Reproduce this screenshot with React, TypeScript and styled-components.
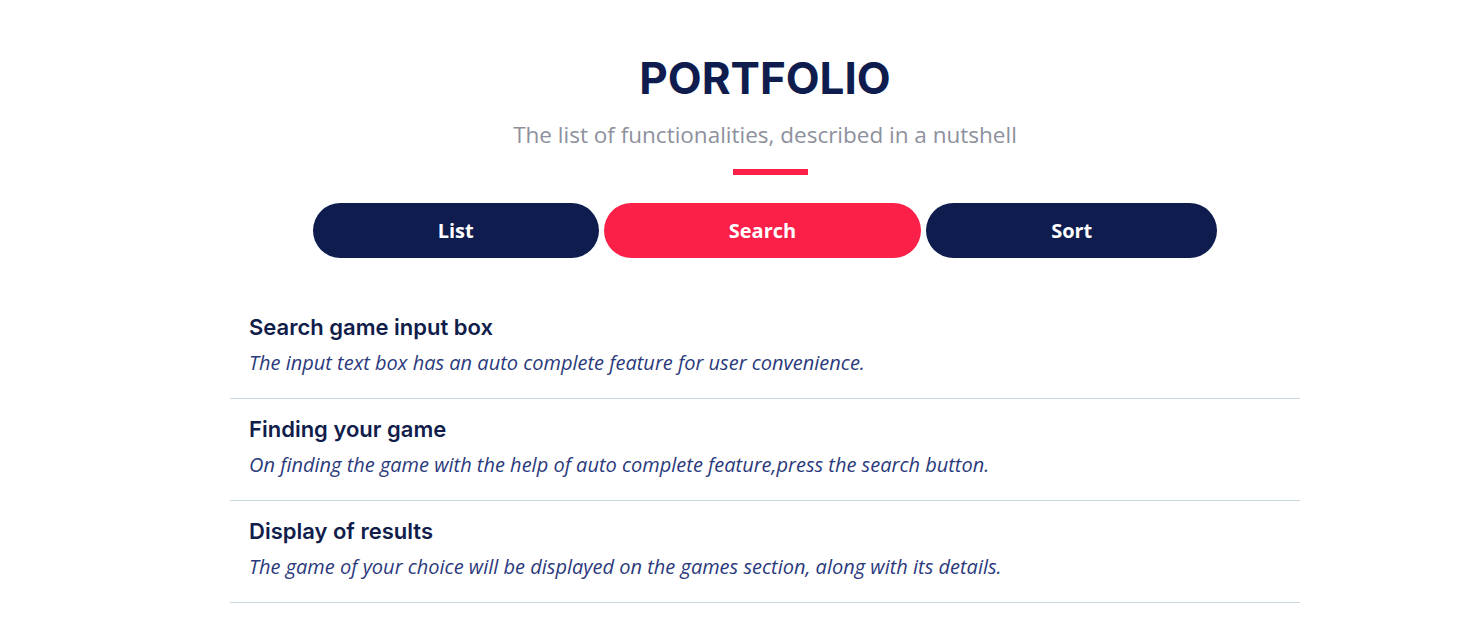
import React from "react";
import styled, { createGlobalStyle } from "styled-components";

const Global = createGlobalStyle`
  html, body { margin: 0; padding: 0; background: #ffffff; }
  body { font-family: "Open Sans", "Liberation Sans", sans-serif; }
`;

const Page = styled.div`
  padding: 52px 0 0 55px;
  display: flex;
  flex-direction: column;
  align-items: center;
`;

const Title = styled.h1`
  margin: 0;
  font-family: "Inter", "Lato", sans-serif;
  font-weight: 700;
  font-size: 44px;
  line-height: 52px;
  color: #0e1c4e;
`;

const Subtitle = styled.p`
  margin: 16px 0 0;
  font-family: "Open Sans", sans-serif;
  font-size: 22.5px;
  line-height: 30px;
  color: #8d919c;
`;

const Bar = styled.div`
  width: 75px;
  height: 6px;
  background: #fb2048;
  margin: 19px 0 0 11px;
`;

const Tabs = styled.div`
  display: flex;
  gap: 5px;
  margin-top: 28px;
`;

const Tab = styled.button<{ $active?: boolean }>`
  height: 55px;
  padding: 0 125px;
  border: none;
  border-radius: 28px;
  background: ${(p) => (p.$active ? "#fb2048" : "#0e1c4e")};
  color: #ffffff;
  font-family: "Open Sans", sans-serif;
  font-weight: 700;
  font-size: 20px;
  cursor: pointer;
`;

const List = styled.div`
  width: 1070px;
  margin-top: 39px;
  display: flex;
  flex-direction: column;
`;

const Item = styled.div`
  padding: 14px 19px 18px;
  border-bottom: 1px solid #cad7dd;
`;

const ItemTitle = styled.h3`
  margin: 0;
  font-family: "Inter", "Lato", sans-serif;
  font-weight: 600;
  font-size: 22px;
  line-height: 32px;
  color: #111d4a;
`;

const ItemDesc = styled.p`
  margin: 3px 0 0;
  font-family: "Open Sans", sans-serif;
  font-style: italic;
  font-size: 20px;
  line-height: 34px;
  color: #2b3a7c;
`;

const items = [
  {
    t: "Search game input box",
    d: "The input text box has an auto complete feature for user convenience.",
  },
  {
    t: "Finding your game",
    d: "On finding the game with the help of auto complete feature,press the search button.",
  },
  {
    t: "Display of results",
    d: "The game of your choice will be displayed on the games section, along with its details.",
  },
];

export default function App() {
  return (
    <>
      <Global />
      <Page>
        <Title>PORTFOLIO</Title>
        <Subtitle>The list of functionalities, described in a nutshell</Subtitle>
        <Bar />
        <Tabs>
          <Tab>List</Tab>
          <Tab $active>Search</Tab>
          <Tab>Sort</Tab>
        </Tabs>
        <List>
          {items.map((i) => (
            <Item key={i.t}>
              <ItemTitle>{i.t}</ItemTitle>
              <ItemDesc>{i.d}</ItemDesc>
            </Item>
          ))}
        </List>
      </Page>
    </>
  );
}
